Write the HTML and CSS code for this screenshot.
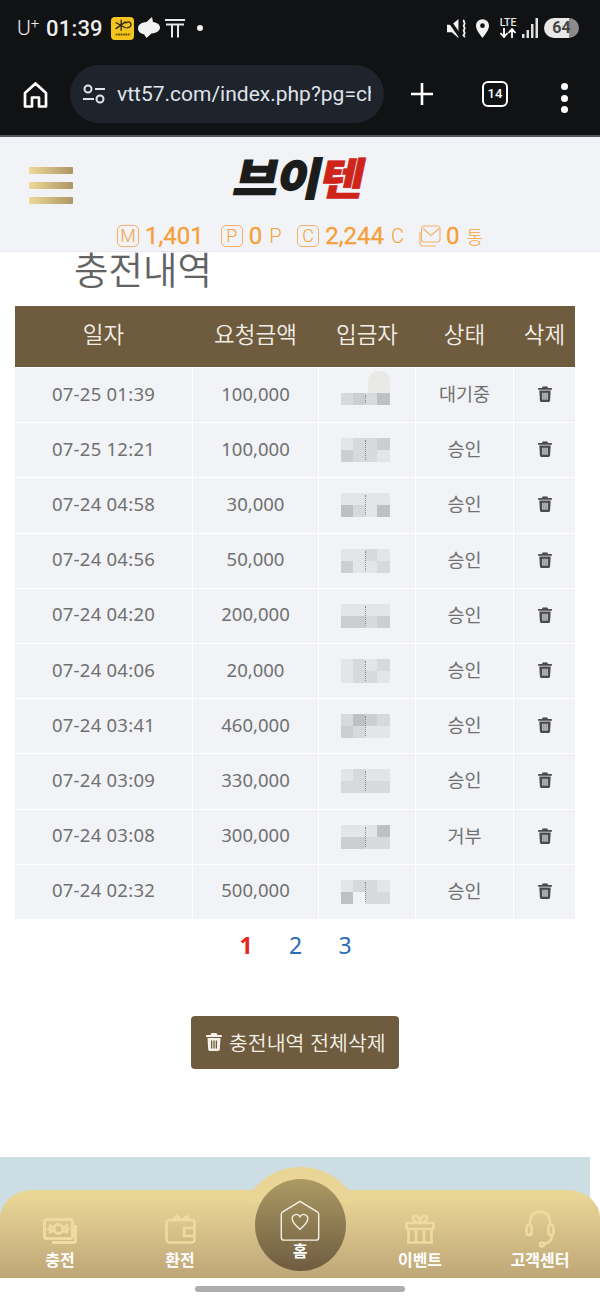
FILE: index.html
```html
<!DOCTYPE html>
<html lang="ko">
<head>
    <meta charset="UTF-8">
    <meta name="viewport" content="width=device-width, initial-scale=1.0">
    <title>충전내역</title>
    <link rel="stylesheet" href="styles.css">
</head>
<body>
<div id="wrap">
    <!-- 상태바 -->
    <div class="status">
        <span class="carrier">U<sup>+</sup></span>
        <span class="clock">01:39</span>
        <span class="app-yellow">
            <svg viewBox="0 0 24 24" width="22" height="22"><path d="M10 3v12M4 6l11 6M15 5L4 13M15 7a3 3 0 1 1 4 4l-3 1" stroke="#2e2a12" stroke-width="1.500" fill="none"/><path d="M4 19h16" stroke="#6b5a00" stroke-width="2.200" stroke-dasharray="2 .6"/></svg>
        </span>
        <svg class="ic-bubble" viewBox="0 0 24 24" width="24" height="24"><path d="M15 1L9.500 6C4 6.500 1 9 1 12.500c0 3 2.500 5 6 5.700L9.500 22l5-4.500C20 17 23 14.500 23 11.500 23 8.500 20 6.500 16 6z" fill="#f2f2f2"/></svg>
        <svg class="ic-t" viewBox="0 0 20 20" width="20" height="20"><path d="M0 2h20M1 6.500h18M7 7v12.500M13 7v12.500" stroke="#e8e8e8" stroke-width="2" fill="none"/></svg>
        <span class="dot"></span>
        <span class="status-right">
            <svg viewBox="0 0 22 22" width="21" height="21"><path d="M0 7h5l7-6v20l-7-6H0z" fill="#f2f2f2"/><path d="M1 1l14 20" stroke="#111214" stroke-width="3.500"/><path d="M18 2c-2 2 2 3 0 5s2 3 0 5 2 3 0 5 1 2 0 3" stroke="#f2f2f2" stroke-width="2" fill="none"/></svg>
            <svg class="ic-pin" viewBox="0 0 16 20" width="15" height="19"><path fill-rule="evenodd" d="M8 0a7 7 0 0 1 7 7c0 5-7 13-7 13S1 12 1 7a7 7 0 0 1 7-7zm0 4.500a2.500 2.500 0 1 0 0 5 2.500 2.500 0 0 0 0-5z" fill="#f2f2f2"/></svg>
            <span class="lte">LTE
                <svg viewBox="0 0 18 10" width="18" height="10"><path d="M5 0v8M1.500 5L5 9l3.500-4M13 10V2M9.500 5L13 1l3.500 4" stroke="#fff" stroke-width="1.800" fill="none"/></svg>
            </span>
            <svg class="ic-signal" viewBox="0 0 17 20" width="17" height="20"><path d="M1 20v-4h2.500v4zM5.500 20v-8H8v8zM10 20V6h2.500v14zM14.500 20V0H17v20z" fill="#e0e0e0"/></svg>
            <span class="battery">64</span>
        </span>
    </div>

    <!-- 브라우저 주소창 -->
    <div class="browser">
        <svg class="ic-home" viewBox="0 0 24 26" width="25" height="26"><path d="M1.500 11L12 1.500 22.500 11v13.500h-7V15.500h-7v9h-7z" fill="none" stroke="#fff" stroke-width="2.700" stroke-linejoin="round"/></svg>
        <div class="urlbar">
            <svg viewBox="0 0 24 22" width="24" height="22"><circle cx="6" cy="6" r="3.500" fill="none" stroke="#dfe3ea" stroke-width="2"/><path d="M13 6h10M1 16h11" stroke="#dfe3ea" stroke-width="2"/><circle cx="18" cy="16" r="3.500" fill="none" stroke="#dfe3ea" stroke-width="2"/></svg>
            <span class="url">vtt57.com/index.php?pg=ch</span>
        </div>
        <svg class="ic-plus" viewBox="0 0 24 24" width="24" height="24"><path d="M12 1v22M1 12h22" stroke="#fff" stroke-width="2.600"/></svg>
        <span class="tabs">14</span>
        <span class="more"><i></i><i></i><i></i></span>
    </div>

    <!-- 사이트 헤더 -->
    <header class="head">
        <div class="head-top">
            <span class="burger"><i></i><i></i><i></i></span>
            <span class="logo">브이<em>텐</em></span>
        </div>
        <div class="wallet">
            <span class="box">M</span><span class="num w-m">1,401</span>
            <span class="box">P</span><span class="num">0</span><span class="unit">P</span>
            <span class="box">C</span><span class="num">2,244</span><span class="unit">C</span>
            <span class="box box-mail"><svg viewBox="0 0 22 22" width="22" height="22"><path d="M5 1h13.500A2.500 2.500 0 0 1 21 3.500v11a2.500 2.500 0 0 1-2.500 2.500H5a2.500 2.500 0 0 1-2.500-2.500v-11A2.500 2.500 0 0 1 5 1zM4 3.500l8 7 8-7M1 7v11.500A3 3 0 0 0 4 21h13" fill="none" stroke="#f5b169" stroke-width="1.100"/></svg></span><span class="num">0</span><span class="unit unit-kr">통</span>
        </div>
    </header>

    <h2 class="title">충전내역</h2>

    <div class="list">
        <div class="row row-head"><span>일자</span><span>요청금액</span><span>입금자</span><span>상태</span><span>삭제</span></div>

        <div class="row"><span class="date">07-25 01:39</span><span>100,000</span><span><b class="mosaic half"><i class="g1"></i><i class="g2"></i><i class="g1"></i><i class="g3"></i></b></span><span>대기중</span><span><svg class="ic-trash" viewBox="0 0 16 18"><use href="#trash"/></svg></span></div>
        <div class="row"><span class="date">07-25 12:21</span><span>100,000</span><span><b class="mosaic"><i class="g0"></i><i class="g1"></i><i class="g1"></i><i class="g2"></i><i class="g2"></i><i class="g1"></i><i class="g1"></i><i class="g0"></i></b></span><span>승인</span><span><svg class="ic-trash" viewBox="0 0 16 18"><use href="#trash"/></svg></span></div>
        <div class="row"><span class="date">07-24 04:58</span><span>30,000</span><span><b class="mosaic"><i class="g0"></i><i class="g0"></i><i class="g0"></i><i class="g0"></i><i class="g3"></i><i class="g1"></i><i class="g0"></i><i class="g3"></i></b></span><span>승인</span><span><svg class="ic-trash" viewBox="0 0 16 18"><use href="#trash"/></svg></span></div>
        <div class="row"><span class="date">07-24 04:56</span><span>50,000</span><span><b class="mosaic"><i class="g0"></i><i class="g0"></i><i class="g1"></i><i class="g0"></i><i class="g2"></i><i class="g0"></i><i class="g0"></i><i class="g1"></i></b></span><span>승인</span><span><svg class="ic-trash" viewBox="0 0 16 18"><use href="#trash"/></svg></span></div>
        <div class="row"><span class="date">07-24 04:20</span><span>200,000</span><span><b class="mosaic"><i class="g0"></i><i class="g0"></i><i class="g0"></i><i class="g0"></i><i class="g2"></i><i class="g2"></i><i class="g1"></i><i class="g2"></i></b></span><span>승인</span><span><svg class="ic-trash" viewBox="0 0 16 18"><use href="#trash"/></svg></span></div>
        <div class="row"><span class="date">07-24 04:06</span><span>20,000</span><span><b class="mosaic"><i class="g0"></i><i class="g1"></i><i class="g0"></i><i class="g1"></i><i class="g0"></i><i class="g1"></i><i class="g1"></i><i class="g0"></i></b></span><span>승인</span><span><svg class="ic-trash" viewBox="0 0 16 18"><use href="#trash"/></svg></span></div>
        <div class="row"><span class="date">07-24 03:41</span><span>460,000</span><span><b class="mosaic"><i class="g1"></i><i class="g3"></i><i class="g2"></i><i class="g1"></i><i class="g2"></i><i class="g1"></i><i class="g0"></i><i class="g0"></i></b></span><span>승인</span><span><svg class="ic-trash" viewBox="0 0 16 18"><use href="#trash"/></svg></span></div>
        <div class="row"><span class="date">07-24 03:09</span><span>330,000</span><span><b class="mosaic"><i class="g0"></i><i class="g1"></i><i class="g0"></i><i class="g0"></i><i class="g1"></i><i class="g1"></i><i class="g1"></i><i class="g1"></i></b></span><span>승인</span><span><svg class="ic-trash" viewBox="0 0 16 18"><use href="#trash"/></svg></span></div>
        <div class="row"><span class="date">07-24 03:08</span><span>300,000</span><span><b class="mosaic"><i class="g0"></i><i class="g0"></i><i class="g0"></i><i class="g3"></i><i class="g2"></i><i class="g2"></i><i class="g1"></i><i class="g1"></i></b></span><span>거부</span><span><svg class="ic-trash" viewBox="0 0 16 18"><use href="#trash"/></svg></span></div>
        <div class="row"><span class="date">07-24 02:32</span><span>500,000</span><span><b class="mosaic"><i class="g0"></i><i class="g1"></i><i class="g1"></i><i class="g0"></i><i class="g3"></i><i class="g9"></i><i class="g1"></i><i class="g1"></i></b></span><span>승인</span><span><svg class="ic-trash" viewBox="0 0 16 18"><use href="#trash"/></svg></span></div>
    </div>

    <div class="pages"><a href="#" class="on">1</a><a href="#">2</a><a href="#">3</a></div>

    <div class="btn-wrap">
        <button type="button" class="btn-del"><svg viewBox="0 0 16 18" width="16" height="18"><use href="#trash"/></svg>충전내역 전체삭제</button>
    </div>

    <div class="banner"></div>

    <!-- 하단 메뉴 -->
    <nav class="dock">
        <span class="bump"></span>
        <a href="#" class="dock-item">
            <svg viewBox="0 0 34 26" width="34" height="26" fill="none" stroke="#eddb9f" stroke-width="3"><rect x="1.500" y="1.500" width="28" height="19" rx="2"/><circle cx="15.500" cy="11" r="4.500"/><path d="M6 7l3 2-3 2 3 2-3 2M25 7l-3 2 3 2-3 2 3 2M32.500 7v16a1.500 1.500 0 0 1-1.500 1.500H9"/></svg>
            <span>충전</span>
        </a>
        <a href="#" class="dock-item">
            <svg viewBox="0 0 31 30" width="31" height="30" fill="none" stroke="#eddb9f" stroke-width="2.600"><path d="M4 6h23a2.500 2.500 0 0 1 2.500 2.500v17a3 3 0 0 1-3 3h-22a3 3 0 0 1-3-3v-17A2.500 2.500 0 0 1 4 6zM8 6l4-4 4 4M17 6l5-4 3 4M19 14h10.500v8H19z"/></svg>
            <span>환전</span>
        </a>
        <a href="#" class="dock-home">
            <svg viewBox="0 0 44 46" width="42" height="42" fill="none" stroke="#f6f2e6" stroke-width="1.500"><path d="M22 1.500L41 13a3 3 0 0 1 1.500 2.500V41a3 3 0 0 1-3 3h-35a3 3 0 0 1-3-3V15.500A3 3 0 0 1 3 13z" stroke-linejoin="round"/><path d="M22 32c-4-3.500-8.500-7-8.500-11.500a4.500 4.500 0 0 1 8.500-2.200 4.500 4.500 0 0 1 8.500 2.200C30.500 25 26 28.500 22 32z"/></svg>
            <span>홈</span>
        </a>
        <a href="#" class="dock-item">
            <svg viewBox="0 0 30 30" width="30" height="30" fill="none" stroke="#eddb9f" stroke-width="2.600"><rect x="1.500" y="9" width="27" height="6" rx="1"/><path d="M3.500 15v13.500h23V15M11 15v13.500M19 15v13.500M15 9C8 9 6 1.500 10.500 1.500 13 1.500 15 5 15 9zm0 0c7 0 9-7.500 4.500-7.500C17 1.500 15 5 15 9z"/></svg>
            <span>이벤트</span>
        </a>
        <a href="#" class="dock-item item-tall">
            <svg viewBox="0 0 30 38" width="30" height="38" fill="none" stroke="#eddb9f" stroke-width="2.600"><path d="M5 15v-3C5 6 9.500 1.500 15 1.500S25 6 25 12v3M27 25c0 5-3 8-8 9"/><rect x="1.500" y="15" width="5" height="10" rx="2.500"/><rect x="23.500" y="15" width="5" height="10" rx="2.500"/><circle cx="17" cy="34.500" r="2"/></svg>
            <span>고객센터</span>
        </a>
    </nav>

    <div class="homebar"></div>
</div>

<!-- 휴지통 아이콘 -->
<svg class="defs" width="0" height="0">
    <symbol id="trash" viewBox="0 0 16 18">
        <path fill="currentColor" fill-rule="evenodd" d="M5.500 0h5l1 2H15a1 1 0 0 1 1 1v1H0V3a1 1 0 0 1 1-1h3.500zM1.500 5h13l-.7 11.500A1.600 1.600 0 0 1 12.200 18H3.800a1.600 1.600 0 0 1-1.600-1.500zM5 7.500v8h1.300v-8zm2.350 0v8h1.300v-8zm2.350 0v8H11v-8z"/>
    </symbol>
</svg>
</body>
</html>
```

FILE: styles.css
```css
* {margin: 0; padding: 0; box-sizing: border-box;}
html, body {width: 600px; height: 1300px; overflow: hidden; background-color: #fff;}
body {font-family: "Noto Sans", "Noto Sans CJK KR", sans-serif; color: #707070;}
a {text-decoration: none; color: inherit;}
i, em {font-style: normal; display: block;}
svg {display: block; flex: none;}
.defs {position: absolute;}

#wrap {position: relative; width: 600px; height: 1300px;}

/* 상태바 */
.status {height: 56px; background-color: #111214; display: flex; align-items: center; padding: 0 21px 0 17px; color: #eee; font-family: Roboto, sans-serif;}
.carrier {font-size: 21px; width: 29px; font-weight: 300; line-height: 1;}
.carrier sup {font-size: 15px; line-height: 0; vertical-align: 7px;}
.clock {font-size: 22px; font-weight: 500; width: 65px; letter-spacing: 0.2px;}
.app-yellow {width: 23px; height: 23px; border-radius: 4px; background-color: #f4c51f; display: flex; justify-content: center; align-items: center; margin-right: 3px;}
.ic-bubble {margin-right: 4px;}
.dot {width: 6px; height: 6px; border-radius: 50%; background-color: #eee; margin-left: 12px;}
.status-right {margin-left: auto; display: flex; align-items: center; gap: 7px;}
.ic-pin {margin-right: 2px;}
.lte {font-size: 10.500px; line-height: 10px; font-weight: 500; width: 18px; text-align: center; color: #e8e8e8;}
.ic-signal {margin-left: -3px; margin-right: -1px;}
.battery {width: 35px; height: 20px; border-radius: 10px; background: linear-gradient(90deg, #e8e8e8 0, #e8e8e8 70%, #8b8b8b 70%); color: #444; font-size: 16px; font-weight: 700; text-align: center; line-height: 20px;}

/* 브라우저 주소창 */
.browser {height: 81px; background-color: #111214; display: flex; align-items: flex-start; padding: 9px 0 0 23px; border-bottom: 2px solid #50555f; position: relative;}
.ic-home {margin-top: 17px;}
.urlbar {width: 314px; height: 58px; margin-left: 22px; border-radius: 29px; background-color: #1f232b; display: flex; align-items: center; padding-left: 12px; color: #dfe3ea;}
.url {font-family: Roboto, sans-serif; font-size: 21px; width: 254px; margin-left: 11px; overflow: hidden; white-space: nowrap; font-weight: 400;}
.ic-plus {margin: 17px 0 0 26px;}
.tabs {width: 26px; height: 26px; margin: 16px 0 0 48px; border: 2px solid #fff; border-radius: 6px; color: #fff; font: 500 13px/22px Roboto, sans-serif; text-align: center;}
.more {margin: 18px 0 0 53px; display: flex; flex-direction: column; gap: 4.500px;}
.more i {width: 7px; height: 7px; border-radius: 50%; background-color: #fff;}

/* 헤더 */
.head {position: relative; z-index: 5; height: 115px; background-color: #f1f3f6; border-bottom: 1px solid #e6e7e9;}
.head-top {height: 84px; position: relative; display: flex; justify-content: center; padding-top: 9px;}
.burger {position: absolute; left: 29px; top: 30px; display: flex; flex-direction: column; gap: 8.500px;}
.burger i {width: 44px; height: 6.500px; border-radius: 1px; background: linear-gradient(90deg, #ecd998, #ae9664);}
.logo {font-family: "Noto Sans CJK KR", sans-serif; font-size: 46px; line-height: 60px; font-weight: 900; letter-spacing: -1.500px; color: #1c1c1c; -webkit-text-stroke: 1.400px #1c1c1c; transform: skewX(-12deg) scale(1.05, .96); display: flex; height: 60px;}
.logo em {color: #cf241a; -webkit-text-stroke: .6px #cf241a;}
.wallet {display: flex; align-items: center; padding-left: 117px; color: #f5a03a; font-family: Roboto, "Noto Sans CJK KR", sans-serif;}
.box {width: 22px; height: 22px; border: 1px solid #f5b169; border-radius: 5px; font-size: 18px; font-weight: 300; line-height: 20px; text-align: center; margin-right: 6px; flex: none;}
.box-mail {border: 0; margin-right: 5px;}
.num {font-size: 24px; font-weight: 400; line-height: 30px; margin-right: 7px; -webkit-text-stroke: .3px #f5a03a;}
.w-m {margin-right: 17px;}
.unit {font-size: 20px; font-weight: 300; margin-right: 16px; width: 12px;}
.unit-kr {font-family: "Noto Sans CJK KR", sans-serif; font-size: 18px; width: auto;}

.title {font-family: "Noto Sans CJK KR", sans-serif; font-size: 37.500px; font-weight: 350; line-height: 36px; height: 56px; margin-top: -2px; padding-left: 74px; color: #636363;}

/* 내역 목록 */
.list {margin: 0 25px 0 15px; display: flex; flex-direction: column; gap: 1px;}
.row {display: grid; grid-template-columns: 177px 125px 96px 97px 61px; column-gap: 1px; height: 54.200px; font-size: 18.500px;}
.row span {background-color: #f1f3f6; display: flex; justify-content: center; align-items: center; font-weight: 400; padding-bottom: 4px;}
.row .date {letter-spacing: .25px;}
.row-head {height: 61px; background-color: #6f5b3e; font-size: 22.500px; color: #f1eee6; font-family: "Noto Sans CJK KR", sans-serif;}
.row-head span {background: none; font-weight: 350; padding-bottom: 7px;}
.ic-trash {width: 14px; height: 16px; margin-top: 2px; color: #4a4a4a;}

/* 가려진 이름 */
.mosaic {position: relative; display: grid; grid-template-columns: repeat(4, 12.250px); grid-auto-rows: 12px; margin: 4px 4px 0 0;}
.mosaic.half {margin-top: 12px;}
.mosaic::after {content: ""; position: absolute; left: 50%; top: 2px; bottom: 2px; border-left: 1px dotted #8a8a8a;}
.mosaic.half::before {content: ""; position: absolute; left: 27px; top: -22px; width: 22px; height: 22px; border-radius: 10px 10px 0 0; background-color: #e9e9e7;}
.g0 {background-color: #e4e5e8;}
.g1 {background-color: #d8d9dc;}
.g2 {background-color: #cdced1;}
.g3 {background-color: #bfc0c3;}
.g9 {background-color: #f1f3f6;}

/* 페이지 */
.pages {display: flex; justify-content: center; gap: 35.500px; padding-right: 9px; margin-top: 9px; height: 34px; font-size: 23px; line-height: 34px; color: #2f6cb8;}
.pages a {width: 14px; text-align: center;}
.pages .on {color: #e8261f; font-weight: 700;}

.btn-wrap {margin-top: 54px; padding-left: 191px;}
.btn-del {width: 208px; height: 53px; border: 0; border-radius: 4px; background-color: #6f5b3e; color: #f5f1e8; display: flex; align-items: center; padding-left: 15px; gap: 7px; font-family: "Noto Sans CJK KR", sans-serif; font-size: 20.500px; font-weight: 350; white-space: nowrap;}

.banner {margin-top: 88px; width: 590px; height: 121px; background-color: #cddde4;}

/* 하단 메뉴 */
.dock {position: absolute; left: 0; top: 1190px; width: 600px; height: 88px; border-radius: 32px 32px 0 0 / 28px 28px 0 0; background: linear-gradient(#e9d596 8%, #bea677); display: flex; justify-content: space-between; color: #fff;}
.bump {position: absolute; left: 239.500px; top: -23px; width: 121px; height: 121px; border-radius: 50%; background-color: #e9d596; clip-path: inset(0 0 70% 0);}
.dock-item {width: 120px; display: flex; flex-direction: column; align-items: center; justify-content: flex-end; height: 80px; gap: 4px; font-family: "Noto Sans CJK KR", sans-serif; font-size: 16px; font-weight: 700; line-height: 22px;}
.item-tall {gap: 0; margin-top: -3px; height: 83px;}
.dock-home {position: relative; width: 91px; height: 92px; margin: -11px 14.500px 0; border-radius: 50%; background: linear-gradient(#ac9a65, #6f5c40); display: flex; flex-direction: column; align-items: center; padding-top: 21px; font-family: "Noto Sans CJK KR", sans-serif; font-size: 16px; font-weight: 700; line-height: 18px;}
.dock-home span {margin-top: -1px;}

.homebar {position: absolute; left: 195px; top: 1286px; width: 210px; height: 6px; border-radius: 3px; background-color: #adadad;}
```
